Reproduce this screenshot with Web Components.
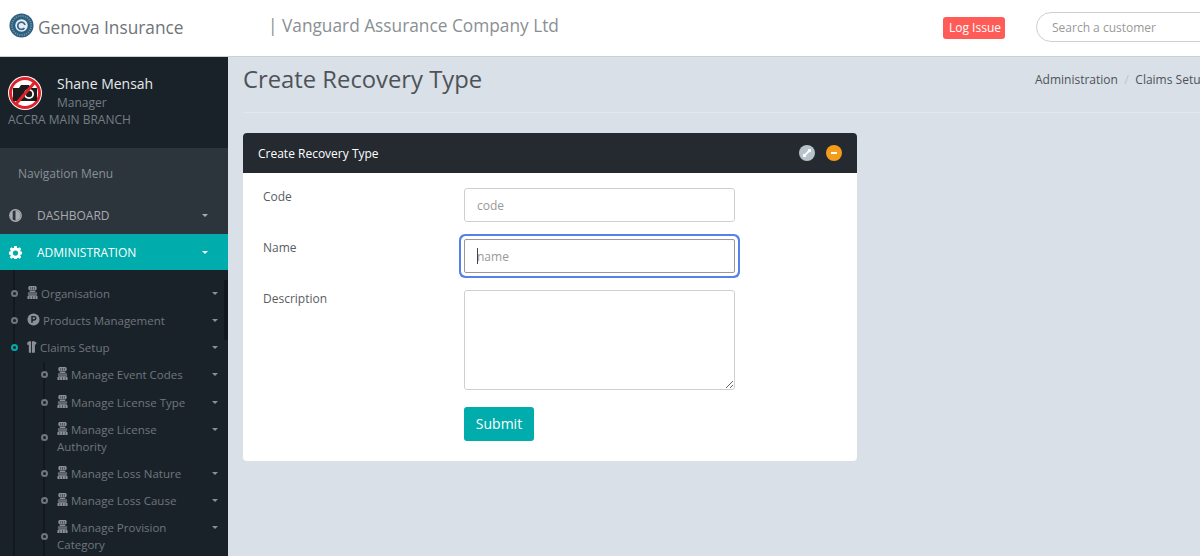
<!DOCTYPE html>
<html lang="en">
<head>
<meta charset="utf-8">
<title>Create Recovery Type</title>
<style>
  html, body { margin: 0; height: 100%; overflow: hidden; }
  body { font-family: "Open Sans", "Liberation Sans", sans-serif; font-size: 12px; color: #585d63; background: #d9e0e7; }
</style>
</head>
<body>
<app-shell>
  <top-bar slot="top"></top-bar>
  <side-nav slot="side">
    <nav-item level="0" icon="stamp">Organisation</nav-item>
    <nav-item level="0" icon="product">Products Management</nav-item>
    <nav-item level="0" icon="shirt" active>Claims Setup</nav-item>
    <nav-item level="1" icon="stamp">Manage Event Codes</nav-item>
    <nav-item level="1" icon="stamp">Manage License Type</nav-item>
    <nav-item level="1" icon="stamp">Manage License Authority</nav-item>
    <nav-item level="1" icon="stamp">Manage Loss Nature</nav-item>
    <nav-item level="1" icon="stamp">Manage Loss Cause</nav-item>
    <nav-item level="1" icon="stamp">Manage Provision Category</nav-item>
  </side-nav>
  <page-head slot="main" title="Create Recovery Type"></page-head>
  <panel-card slot="main" title="Create Recovery Type">
    <form-row label="Code"><text-field placeholder="code"></text-field></form-row>
    <form-row label="Name"><text-field placeholder="name" focused></text-field></form-row>
    <form-row label="Description"><text-field placeholder="" multiline></text-field></form-row>
    <form-row><submit-button>Submit</submit-button></form-row>
  </panel-card>
</app-shell>

<script>
const ICONS = {
  stamp: `<svg viewBox="0 0 12 14" width="11" height="13"><path fill="currentColor" d="M2.500 0h7l1 1v2.500l-1 1h-7l-1-1V1zM3 5h6v1.500H3zM1 7h10v2.500H1zM2 10h8l1.500 1v3H.5v-3z"/><path stroke="#1a2229" stroke-width=".6" d="M4 1v3M6 1v3M8 1v3M1 8.500h10M3 11v3M6 11v3M9 11v3"/></svg>`,
  product: `<svg viewBox="0 0 14 14" width="13" height="13"><circle cx="7" cy="7" r="6.500" fill="currentColor"/><path fill="none" stroke="#1a2229" stroke-width="1.600" d="M5.400 10.600V3.900h2.200a1.800 1.800 0 0 1 0 3.700H5.400"/></svg>`,
  shirt: `<svg viewBox="0 0 11 14" width="10" height="13"><path fill="currentColor" d="M3 1l1.500.500V14H3a1 1 0 0 1-1-1V5L.8 5.500 0 3zM5.500 1.500L7 1l3.500 1.500-.8 2.500-1-.4V13a1 1 0 0 1-1 1H5.500z"/></svg>`,
  contrast: `<svg viewBox="0 0 14 14" width="13" height="13"><circle cx="7" cy="7" r="6.200" fill="#2d353c" stroke="currentColor" stroke-width="1.400"/><path fill="currentColor" d="M7 1.500a5.500 5.500 0 0 1 0 11z"/><path fill="currentColor" d="M1 7a6 6 0 0 1 3-5v10a6 6 0 0 1-3-5z"/></svg>`,
  cog: `<svg viewBox="0 0 14 14" width="13" height="13"><path fill="currentColor" fill-rule="evenodd" d="M5.700 0h2.600l.3 1.900 1.200.5L11.400 1.300l1.800 1.800-1.100 1.600.5 1.200 1.900.3v2.600l-1.900.3-.5 1.200 1.100 1.600-1.800 1.800-1.600-1.100-1.200.5-.3 1.900H5.700l-.3-1.900-1.200-.5-1.600 1.100L.8 12.100l1.100-1.600-.5-1.200L-.5 9V6.200l1.900-.3.5-1.200L.8 3.100l1.800-1.800 1.600 1.100 1.200-.5zM7 4.800a2.800 2.800 0 1 0 0 5.600 2.800 2.800 0 0 0 0-5.600z"/></svg>`
};

// small helper so every component is written the same way
function shadow(el, html) {
  el.attachShadow({ mode: "open" });
  el.shadowRoot.innerHTML = html;
}

class AppShell extends HTMLElement {
  constructor() {
    super();
    shadow(this, `
      <style>
        :host { display: grid; grid-template: 57px 499px / 228px 972px; width: 1200px; height: 556px; overflow: hidden; }
        .top { grid-column: 1 / 3; }
        .main { padding: 0 0 0 15px; overflow: hidden; }
      </style>
      <div class="top"><slot name="top"></slot></div>
      <div><slot name="side"></slot></div>
      <div class="main"><slot name="main"></slot></div>
    `);
  }
}

class TopBar extends HTMLElement {
  constructor() {
    super();
    shadow(this, `
      <style>
        :host { display: flex; align-items: center; height: 56px; background: #fff; border-bottom: 1px solid #ccd0d4; white-space: nowrap; overflow: hidden; }
        .logo { margin: -6px 0 0 9px; width: 25px; height: 25px; flex: none; }
        .brand { margin: -2px 0 0 4px; font-size: 17.300px; color: #6f7479; width: 230px; flex: none; }
        .company { font-size: 17.300px; color: #8a8f94; margin-top: -6px; width: 675px; flex: none; }
        .issue { background: #ff5b57; color: #fff; font-size: 12px; line-height: 22px; padding: 0 6px; border-radius: 3px; width: 50px; text-align: center; margin: -1px 31px 0 0; flex: none; }
        .search { width: 240px; height: 30px; box-sizing: border-box; border: 1px solid #ccd0d4; border-radius: 15px; padding: 0 15px; font: 12px "Open Sans", sans-serif; color: #585d63; flex: none; margin-top: -2px; outline: none; }
        .search::placeholder { color: #999; opacity: 1; }
      </style>
      <svg class="logo" viewBox="0 0 26 26">
        <circle cx="13" cy="13" r="12.500" fill="#2c5f7d"/>
        <circle cx="13" cy="13" r="10" fill="none" stroke="#6d93aa" stroke-width="2" stroke-dasharray="1.200 1.200"/>
        <circle cx="13" cy="13" r="6.500" fill="#e4ecf1"/>
        <path fill="none" stroke="#35688a" stroke-width="1.800" d="M16 15.500a3.800 3.800 0 1 1 .6-3"/>
      </svg>
      <span class="brand">Genova Insurance</span>
      <span class="company">| Vanguard Assurance Company Ltd</span>
      <span class="issue">Log Issue</span>
      <input class="search" placeholder="Search a customer">
    `);
  }
}

class SideNav extends HTMLElement {
  constructor() {
    super();
    shadow(this, `
      <style>
        :host { display: block; height: 499px; background: #1a2229; color: #767d83; overflow: hidden; }
        .user { display: grid; grid-template-columns: 49px 1fr; grid-template-rows: 36px auto; height: 91px; box-sizing: border-box; padding: 17px 0 0 8px; }
        .avatar { width: 34px; height: 34px; margin-top: 2px; }
        .name { color: #e6e9eb; font-size: 14px; line-height: 19px; }
        .role { font-size: 12px; line-height: 19px; color: #767d83; }
        .branch { grid-column: 1 / 3; margin-top: 1px; font-size: 12px; line-height: 17px; }
        .menu { background: #2d353c; padding-bottom: 1px; }
        .head { height: 49px; box-sizing: border-box; padding: 17px 0 0 18px; color: #889097; line-height: 17px; }
        .tree { position: relative; padding: 10px 0 0; height: 286px; box-sizing: border-box; overflow: hidden; }
        .tree::before { content: ""; position: absolute; left: 13px; top: 0; bottom: 0; width: 2px; background: #12181e; }
        .tree::after { content: ""; position: absolute; left: 43px; top: 92px; bottom: 0; width: 2px; background: #12181e; }
        .thumb { position: absolute; right: 0; top: 10px; width: 4px; height: 60px; background: #12181e; }
      </style>
      <div class="user">
        <svg class="avatar" viewBox="0 0 34 34">
          <circle cx="17" cy="17" r="17" fill="#fff"/>
          <circle cx="17" cy="17" r="14.500" fill="#fff" stroke="#e0202a" stroke-width="3"/>
          <path fill="#1c1c1c" d="M5 12h6l2-3h8l2 3h6v13H5z"/>
          <circle cx="21" cy="18" r="5" fill="#fff"/><circle cx="21" cy="18" r="3.200" fill="#1c1c1c"/>
          <path stroke="#e0202a" stroke-width="3" d="M27 6L8 28"/>
        </svg>
        <div><div class="name">Shane Mensah</div><div class="role">Manager</div></div>
        <div class="branch">ACCRA MAIN BRANCH</div>
      </div>
      <div class="menu">
        <div class="head">Navigation Menu</div>
        <nav-link icon="contrast">DASHBOARD</nav-link>
      </div>
      <nav-link icon="cog" selected>ADMINISTRATION</nav-link>
      <div class="tree"><div class="thumb"></div><slot></slot></div>
    `);
  }
}

class NavLink extends HTMLElement {
  constructor() {
    super();
    const on = this.hasAttribute("selected");
    shadow(this, `
      <style>
        :host { display: flex; align-items: center; height: 36px; padding: 0 0 0 9px; background: ${on ? "#00acac" : "transparent"}; color: ${on ? "#fff" : "#a8acb1"}; font-size: 12px; }
        .ico { width: 28px; display: flex; }
        .txt { flex: 1; }
        .caret { margin-right: 20px; border: 3px solid transparent; border-top-color: currentColor; border-bottom: 0; }
      </style>
      <span class="ico">${ICONS[this.getAttribute("icon")]}</span>
      <span class="txt"><slot></slot></span>
      <span class="caret"></span>
    `);
  }
}

class NavItem extends HTMLElement {
  constructor() {
    super();
    const sub = this.getAttribute("level") === "1";
    const on = this.hasAttribute("active");
    shadow(this, `
      <style>
        :host { display: block; position: relative; padding: 5px 30px 5px ${sub ? 57 : 27}px; font-size: 11.500px; line-height: 17.140px; color: #6f767c; }
        .dot { position: absolute; left: ${sub ? 41 : 11}px; top: 50%; margin-top: -3.500px; width: 3px; height: 3px; border: 2px solid ${on ? "#00acac" : "#6f767c"}; border-radius: 50%; background: #1a2229; z-index: 1; }
        .ico { display: inline-block; height: 11px; line-height: 0; vertical-align: -1px; margin-right: 3px; color: #8b9096; }
        .caret { position: absolute; right: 10px; top: 12px; border: 3px solid transparent; border-top-color: #8b9096; border-bottom: 0; }
      </style>
      <span class="dot"></span>
      <span class="ico">${ICONS[this.getAttribute("icon")]}</span><slot></slot>
      <span class="caret"></span>
    `);
  }
}

class PageHead extends HTMLElement {
  constructor() {
    super();
    shadow(this, `
      <style>
        :host { display: flex; justify-content: space-between; align-items: center; height: 55px; width: 1100px; border-bottom: 1px solid #e4e8ec; margin-bottom: 20px; white-space: nowrap; }
        h1 { margin: -12px 0 0; font-size: 23.800px; font-weight: 400; color: #4d5359; line-height: 34px; }
        .crumbs { position: absolute; left: 1035px; top: 71px; font-size: 12px; color: #4d5359; }
        .sep { color: #bfc5ca; padding: 0 6.500px; }
      </style>
      <h1>${this.getAttribute("title")}</h1>
      <div class="crumbs">Administration<span class="sep">/</span>Claims Setup</div>
    `);
  }
}

class PanelCard extends HTMLElement {
  constructor() {
    super();
    shadow(this, `
      <style>
        :host { display: block; width: 614px; background: #fff; border-radius: 4px; overflow: hidden; }
        .bar { display: flex; align-items: center; height: 40px; background: #242a30; padding: 0 15px; color: #fff; font-size: 12px; }
        .title { flex: 1; font-weight: 400; }
        .btn { width: 16px; height: 16px; border-radius: 50%; margin-left: 11px; display: flex; align-items: center; justify-content: center; }
        .grey { background: #b6c2c9; }
        .orange { background: #f59c1a; }
        .body { padding: 15px 20px 20px; }
      </style>
      <div class="bar">
        <span class="title">${this.getAttribute("title")}</span>
        <span class="btn grey"><svg viewBox="0 0 10 10" width="10" height="10"><path fill="none" stroke="#fff" stroke-width="1.800" d="M2.500 7.500l5-5"/><path fill="#fff" d="M1 9V5.500L4.500 9zM9 1v3.500L5.500 1z"/></svg></span>
        <span class="btn orange"><svg viewBox="0 0 10 10" width="10" height="10"><path stroke="#fff" stroke-width="2" d="M2 5h6"/></svg></span>
      </div>
      <div class="body"><slot></slot></div>
    `);
  }
}

class FormRow extends HTMLElement {
  constructor() {
    super();
    shadow(this, `
      <style>
        :host { display: grid; grid-template-columns: 201px 271px; margin-bottom: 17px; }
        :host(:last-child) { margin-bottom: 0; }
        label { font-size: 12px; line-height: 17px; color: #585d63; }
      </style>
      <label>${this.getAttribute("label") || ""}</label>
      <div><slot></slot></div>
    `);
  }
}

class TextField extends HTMLElement {
  constructor() {
    super();
    const multi = this.hasAttribute("multiline");
    const focused = this.hasAttribute("focused");
    const ph = this.getAttribute("placeholder");
    const field = multi
      ? `<textarea class="f" style="height:100px"></textarea>`
      : `<input class="f" placeholder="${ph}">`;
    shadow(this, `
      <style>
        :host { display: block; position: relative; }
        .f { width: 100%; height: 34px; box-sizing: border-box; border: 1px solid ${focused ? "#999" : "#ccd0d4"}; border-radius: 3px; padding: 6px 12px; font: 12px/20px "Open Sans", sans-serif; color: #585d63; background: #fff; outline: none; margin: 0; display: block;
          ${focused ? "box-shadow: 0 0 0 3px #fff, 0 0 0 5px #5680ee; border-radius: 2px;" : ""} }
        .f::placeholder { color: #999; opacity: 1; }
        .caret { position: absolute; left: 13px; top: 9px; width: 1px; height: 16px; background: #444; }
      </style>
      ${field}
      ${focused ? `<span class="caret"></span>` : ""}
    `);
  }
}

class SubmitButton extends HTMLElement {
  constructor() {
    super();
    shadow(this, `
      <style>
        :host { display: inline-block; }
        button { display: block; width: 70px; height: 34px; background: #00acac; color: #fff; border: 0; border-radius: 3px; font: 14px "Open Sans", sans-serif; padding: 0 0 2px; }
      </style>
      <button type="button"><slot></slot></button>
    `);
  }
}

customElements.define("app-shell", AppShell);
customElements.define("top-bar", TopBar);
customElements.define("side-nav", SideNav);
customElements.define("nav-link", NavLink);
customElements.define("nav-item", NavItem);
customElements.define("page-head", PageHead);
customElements.define("panel-card", PanelCard);
customElements.define("form-row", FormRow);
customElements.define("text-field", TextField);
customElements.define("submit-button", SubmitButton);
</script>
</body>
</html>
